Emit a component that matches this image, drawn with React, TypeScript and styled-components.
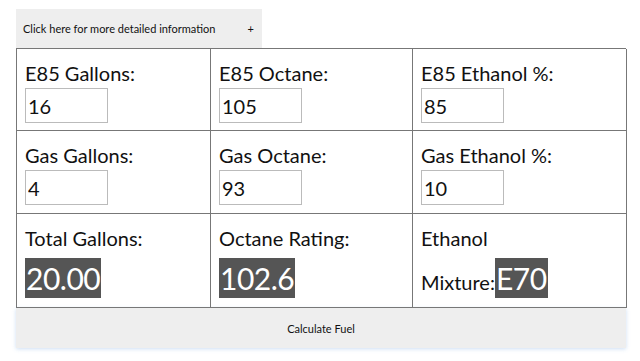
import styled, { createGlobalStyle } from "styled-components"

const GlobalStyle = createGlobalStyle`
  body {
    margin: 0;
    background: #fff;
    font-family: Lato, "Open Sans", sans-serif;
    color: #111;
  }
`

const Page = styled.div`
  padding: 9px 14px 0 16px;
`

const InfoToggle = styled.div`
  display: flex;
  align-items: center;
  justify-content: space-between;
  box-sizing: border-box;
  width: 246px;
  height: 39px;
  padding: 0 8px 0 7px;
  background: #eeeeee;
  font-size: 11px;
  cursor: pointer;
`

const Grid = styled.div`
  display: grid;
  grid-template-columns: 194px 202px 214px;
  grid-template-rows: 82px 83px 94px;
  width: 610px;
  box-sizing: border-box;
  border-top: 1px solid #777;
  border-left: 1px solid #777;
`

const Cell = styled.div`
  box-sizing: border-box;
  padding: 12px 8px 0 8px;
  border-right: 1px solid #777;
  border-bottom: 1px solid #777;
`

const Label = styled.div`
  font-size: 20px;
  line-height: 24px;
`

const FieldInput = styled.input`
  display: block;
  box-sizing: border-box;
  width: 83px;
  height: 35px;
  margin-top: 3px;
  padding: 0 2px;
  border: 1px solid #bbb;
  font-family: inherit;
  font-size: 20px;
  color: #111;
`

const Result = styled.span<{ $inline?: boolean }>`
  display: inline-block;
  margin-top: ${p => (p.$inline ? "0" : "8px")};
  padding: 0 1px;
  background: #555;
  color: #fff;
  font-size: 30px;
  letter-spacing: -0.5px;
  line-height: 40px;
`

const MixLine = styled.div`
  margin-top: 8px;
  font-size: 20px;
`

const CalcButton = styled.button`
  display: block;
  width: 610px;
  height: 40px;
  border: none;
  background: #eeeeee;
  box-shadow: 0 1px 4px rgba(90, 150, 220, 0.3);
  font-family: inherit;
  font-size: 11px;
  color: #111;
  cursor: pointer;
`

const Divider = styled.div`
  margin-top: 13px;
  width: 610px;
  border-top: 1px solid #eee;
`

const inputs = [
  { label: "E85 Gallons:", value: "16" },
  { label: "E85 Octane:", value: "105" },
  { label: "E85 Ethanol %:", value: "85" },
  { label: "Gas Gallons:", value: "4" },
  { label: "Gas Octane:", value: "93" },
  { label: "Gas Ethanol %:", value: "10" },
]

const App = () => {
  return (
    <Page>
      <GlobalStyle />
      <InfoToggle>
        <span>Click here for more detailed information</span>
        <span>+</span>
      </InfoToggle>
      <Grid>
        {inputs.map(f => (
          <Cell key={f.label}>
            <Label>{f.label}</Label>
            <FieldInput type="text" defaultValue={f.value} />
          </Cell>
        ))}
        <Cell>
          <Label>Total Gallons:</Label>
          <Result>20.00</Result>
        </Cell>
        <Cell>
          <Label>Octane Rating:</Label>
          <Result>102.6</Result>
        </Cell>
        <Cell>
          <Label>Ethanol</Label>
          <MixLine>
            Mixture:<Result $inline>E70</Result>
          </MixLine>
        </Cell>
      </Grid>
      <CalcButton>Calculate Fuel</CalcButton>
      <Divider />
    </Page>
  )
}

export default App
